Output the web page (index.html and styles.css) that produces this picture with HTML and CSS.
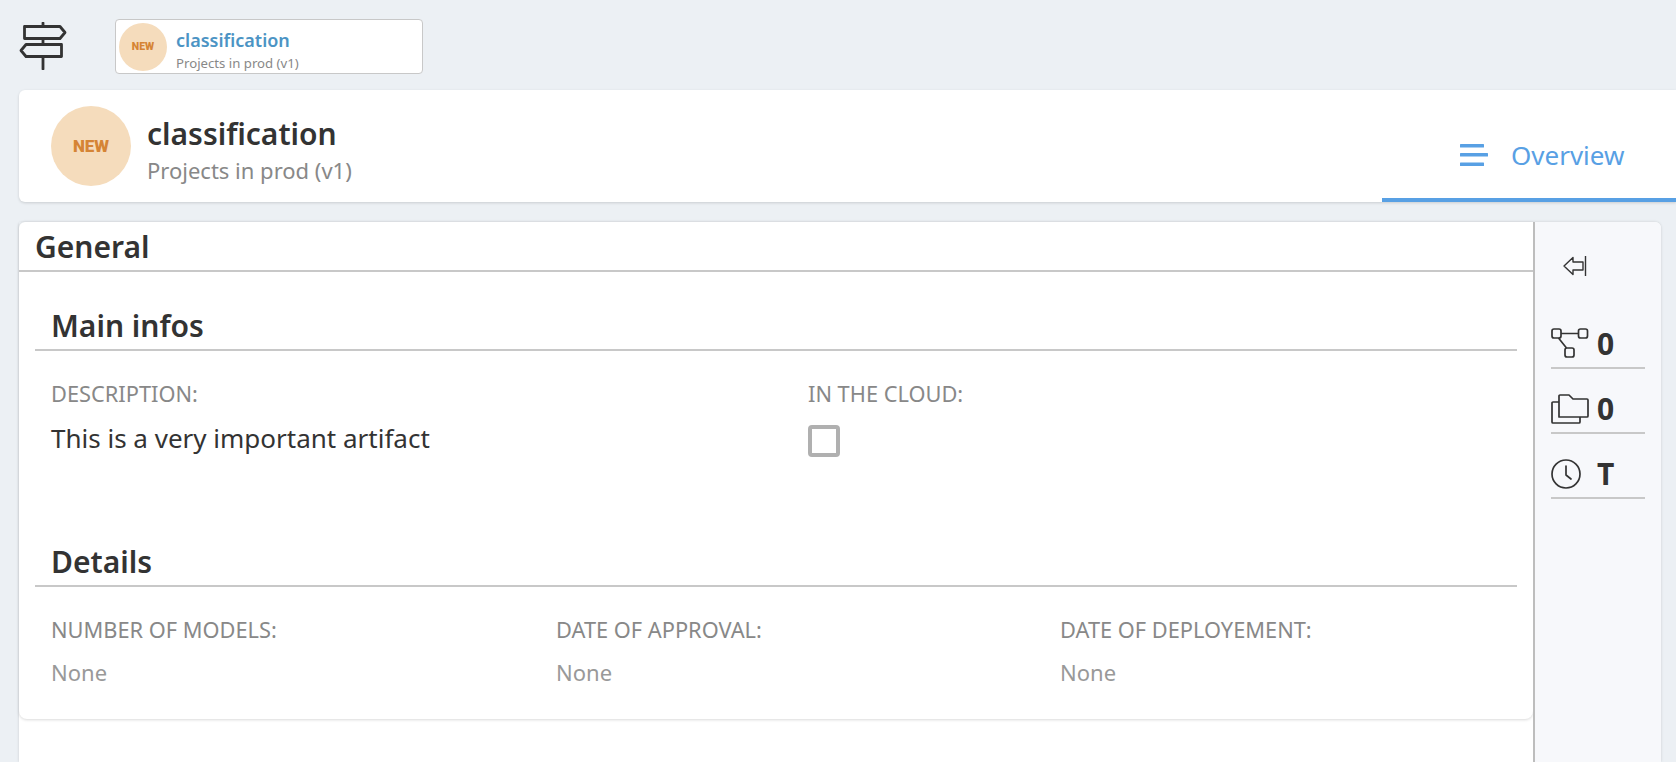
FILE: index.html
```html
<!DOCTYPE html>
<html lang="en">
<head>
    <meta charset="UTF-8">
    <title>classification</title>
    <link rel="stylesheet" href="styles.css">
</head>
<body>
    <nav class="topbar">
        <svg class="signpost" viewBox="0 0 48 48" fill="none" stroke="#333" stroke-width="2.8" stroke-linecap="round" stroke-linejoin="round">
            <path d="M24 1v3M24 17v4M24 35v12"/>
            <path d="M5.500 4.500H41l5 6-5 6H5.500z"/>
            <path d="M42.500 22.500H7l-5 6 5 6h35.500z"/>
        </svg>
        <div class="crumb">
            <div class="badge badge-small"><span>NEW</span></div>
            <div class="crumb-text">
                <div class="crumb-name">classification</div>
                <div class="crumb-sub">Projects in prod (v1)</div>
            </div>
        </div>
    </nav>

    <header class="header">
        <div class="identity">
            <div class="badge badge-large"><span>NEW</span></div>
            <div class="identity-text">
                <div class="title">classification</div>
                <div class="subtitle">Projects in prod (v1)</div>
            </div>
        </div>
        <div class="tab">
            <svg class="tab-icon" viewBox="0 0 28 22" fill="#58a0e4">
                <rect x="0" y="0" width="24" height="3.500" rx="0.5"/>
                <rect x="0" y="9" width="28" height="3.500" rx="0.5"/>
                <rect x="0" y="18.500" width="24" height="3.500" rx="0.5"/>
            </svg>
            <span>Overview</span>
        </div>
    </header>

    <div class="workspace">
        <main class="content">
            <section class="panel">
                <h2 class="panel-title">General</h2>
                <div class="group">
                    <h3 class="group-title">Main infos</h3>
                    <div class="fields fields-two">
                        <div>
                            <div class="label">DESCRIPTION:</div>
                            <div class="value">This is a very important artifact</div>
                        </div>
                        <div>
                            <div class="label">IN THE CLOUD:</div>
                            <div class="checkbox"></div>
                        </div>
                    </div>
                </div>
                <div class="group">
                    <h3 class="group-title">Details</h3>
                    <div class="fields fields-three">
                        <div>
                            <div class="label">NUMBER OF MODELS:</div>
                            <div class="value empty">None</div>
                        </div>
                        <div>
                            <div class="label">DATE OF APPROVAL:</div>
                            <div class="value empty">None</div>
                        </div>
                        <div>
                            <div class="label">DATE OF DEPLOYEMENT:</div>
                            <div class="value empty">None</div>
                        </div>
                    </div>
                </div>
            </section>
        </main>

        <aside class="rail">
            <svg class="collapse" viewBox="0 0 24 20" fill="none" stroke="#333" stroke-width="1.4" stroke-linejoin="round">
                <path d="M1 10l9-8.500V6h10v8H10v4.500z"/>
                <path d="M22.500 0v20"/>
            </svg>
            <div class="stat">
                <svg viewBox="0 0 38 32" fill="none" stroke="#333" stroke-width="1.7">
                    <rect x="1" y="1" width="9" height="9" rx="2"/>
                    <rect x="27.500" y="1" width="9" height="9" rx="2"/>
                    <rect x="14" y="20" width="9" height="9" rx="2"/>
                    <path d="M10 5.500h17.500M7.500 10l8 10"/>
                </svg>
                <span>0</span>
            </div>
            <div class="stat">
                <svg viewBox="0 0 38 32" fill="none" stroke="#333" stroke-width="1.7" stroke-linejoin="round">
                    <path d="M8 24V3a1 1 0 0 1 1-1h9l4 4h14a1 1 0 0 1 1 1v16a1 1 0 0 1-1 1z"/>
                    <path d="M8 9H2a1 1 0 0 0-1 1v19a1 1 0 0 0 1 1h26a1 1 0 0 0 1-1v-5"/>
                </svg>
                <span>0</span>
            </div>
            <div class="stat">
                <svg viewBox="0 0 38 32" fill="none" stroke="#333" stroke-width="1.7" stroke-linecap="round" stroke-linejoin="round">
                    <circle cx="15" cy="16" r="14"/>
                    <path d="M15 8v9l5 4"/>
                </svg>
                <span>T</span>
            </div>
        </aside>
    </div>
</body>
</html>
```

FILE: styles.css
```css
:root {
    --page-bg: #ecf0f4;
    --text-color: #333;
    --muted: #888;
    --line: #c8c8c8;
    --blue: #58a0e4;
    --badge-bg: #f5dcbc;
    --badge-text: #d58435;
}
html, body {
    height: 100%;
}
body {
    font-family: 'Noto Sans', sans-serif;
    background-color: var(--page-bg);
    color: var(--text-color);
    margin: 0;
    display: flex;
    flex-direction: column;
    overflow: hidden;
}
.topbar {
    display: flex;
    align-items: flex-start;
    height: 90px;
    padding: 19px 0 0 19px;
    box-sizing: border-box;
    flex: none;
}
.signpost {
    width: 48px;
    height: 48px;
    margin-top: 3px;
}
.crumb {
    display: flex;
    align-items: center;
    width: 308px;
    height: 55px;
    margin-left: 48px;
    padding-left: 3px;
    box-sizing: border-box;
    background: #fff;
    border: 1px solid var(--line);
    border-radius: 4px;
}
.badge {
    display: flex;
    align-items: center;
    justify-content: center;
    border-radius: 50%;
    background: var(--badge-bg);
    color: var(--badge-text);
    font-family: 'Roboto', sans-serif;
    font-weight: 900;
    flex: none;
}
.badge-small {
    width: 48px;
    height: 48px;
    font-size: 10.5px;
}
.badge-large {
    width: 80px;
    height: 80px;
    font-size: 17px;
}
.crumb-text {
    margin-left: 9px;
    padding-top: 7px;
}
.crumb-name {
    color: #4c94c4;
    font-size: 18px;
    font-weight: 600;
    line-height: 20px;
}
.crumb-sub {
    color: var(--muted);
    font-size: 13.2px;
    line-height: 16px;
    margin-top: 5px;
}
.header {
    display: flex;
    justify-content: space-between;
    height: 112px;
    margin-left: 19px;
    background: #fff;
    border-radius: 6px 0 0 6px;
    box-shadow: 0 1px 3px rgba(0, 0, 0, 0.15);
    flex: none;
}
.identity {
    display: flex;
    align-items: center;
    padding-left: 32px;
}
.identity-text {
    margin-left: 16px;
    padding-top: 8px;
}
.title {
    font-size: 30px;
    font-weight: 600;
    line-height: 36px;
}
.subtitle {
    color: var(--muted);
    font-size: 22px;
    line-height: 30px;
    margin-top: 3px;
}
.tab {
    display: flex;
    align-items: center;
    width: 294px;
    box-sizing: border-box;
    padding: 21px 0 0 78px;
    color: var(--blue);
    font-size: 26px;
    border-bottom: 4px solid var(--blue);
}
.tab-icon {
    width: 28px;
    height: 22px;
    margin-right: 23px;
}
.workspace {
    display: flex;
    flex: 1;
    min-height: 0;
    margin: 20px 15px 0 19px;
    background: #fff;
    border-radius: 6px 6px 0 0;
    box-shadow: 0 0 3px rgba(0, 0, 0, 0.15);
}
.content {
    flex: 1;
    min-width: 0;
}
.panel {
    height: 497px;
    box-sizing: border-box;
    border-radius: 0 0 8px 8px;
    box-shadow: 0 1px 3px rgba(0, 0, 0, 0.15);
}
.panel-title {
    margin: 0;
    padding-left: 16px;
    height: 48px;
    font-size: 30px;
    font-weight: 600;
    line-height: 50px;
    border-bottom: 2px solid var(--line);
}
.group {
    padding: 0 16px;
}
.group-title {
    margin: 0;
    height: 45px;
    padding: 32px 0 0 16px;
    font-size: 30px;
    font-weight: 600;
    line-height: 44px;
    border-bottom: 2px solid var(--line);
}
.fields {
    display: grid;
    padding: 29px 0 0 16px;
}
.fields-two {
    grid-template-columns: 757px 1fr;
    height: 128px;
}
.fields-three {
    grid-template-columns: 505px 504px 1fr;
}
.label {
    color: var(--muted);
    font-size: 21.8px;
    line-height: 28px;
}
.value {
    font-size: 26px;
    line-height: 32px;
    margin-top: 14px;
}
.value.empty {
    color: #999;
    font-size: 22px;
    margin-top: 12px;
}
.checkbox {
    width: 24px;
    height: 24px;
    margin-top: 17px;
    border: 4px solid #b0b0b0;
    border-radius: 4px;
}
.rail {
    width: 128px;
    flex: none;
    box-sizing: border-box;
    padding: 34px 16px 0 16px;
    background: #f7f8fb;
    border-left: 2px solid #bdbdbd;
    border-radius: 0 6px 0 0;
}
.collapse {
    display: block;
    width: 24px;
    height: 20px;
    margin: 0 0 28px 12px;
}
.stat {
    display: flex;
    align-items: center;
    height: 65px;
    box-sizing: border-box;
    padding-top: 16px;
    border-bottom: 2px solid var(--line);
    font-size: 30px;
    font-weight: 700;
}
.stat svg {
    width: 38px;
    height: 32px;
    margin-right: 8px;
}
```
